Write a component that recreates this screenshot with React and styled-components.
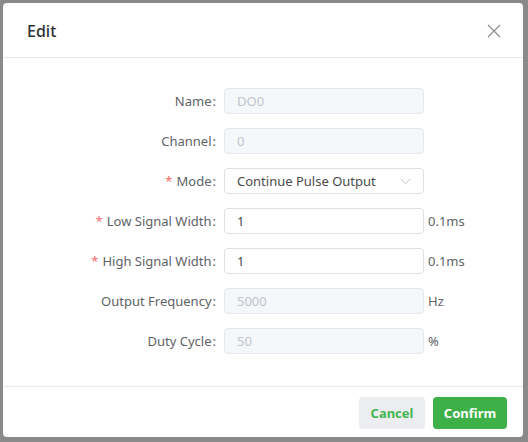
import React from "react";
import styled, { createGlobalStyle } from "styled-components";

const Global = createGlobalStyle`
  html, body { margin: 0; padding: 0; }
  body {
    background: #8a8a8a;
    width: 528px;
    height: 442px;
    overflow: hidden;
    font-family: "Noto Sans", "Open Sans", Arial, sans-serif;
  }
`;

const Overlay = styled.div`
  width: 528px;
  height: 442px;
  padding: 3px 5px 5px 3px;
  box-sizing: border-box;
`;

const Dialog = styled.div`
  width: 520px;
  height: 434px;
  background: #fff;
  border-radius: 4px;
  display: flex;
  flex-direction: column;
  box-sizing: border-box;
`;

const Header = styled.div`
  height: 55px;
  flex: none;
  box-sizing: border-box;
  padding: 0 22px 0 24px;
  display: flex;
  align-items: center;
  justify-content: space-between;
  border-bottom: 1px solid #e8e8e8;
`;

const Title = styled.div`
  font-size: 16px;
  font-weight: 500;
  color: #303133;
  margin-top: 1px;
`;

const CloseBtn = styled.button`
  border: 0;
  background: none;
  padding: 0;
  width: 14px;
  height: 14px;
  display: flex;
  cursor: pointer;
  margin-top: 2px;
`;

const Body = styled.div`
  flex: 1;
  padding-top: 30px;
  display: flex;
  flex-direction: column;
  gap: 14px;
`;

const Row = styled.div`
  display: flex;
  align-items: center;
  height: 26px;
`;

const Label = styled.label`
  width: 213px;
  margin-right: 8px;
  text-align: right;
  font-size: 13px;
  color: #606266;
  white-space: nowrap;
`;

const Star = styled.span`
  color: #f56c6c;
  margin-right: 4px;
`;

const Colon = styled.span`
  margin-left: 1px;
`;

const Input = styled.input`
  width: 200px;
  height: 26px;
  box-sizing: border-box;
  border: 1px solid ${(p) => (p.disabled ? "#e4e7ed" : "#dcdfe6")};
  background: ${(p) => (p.disabled ? "#f5f7fa" : "#fff")};
  color: ${(p) => (p.disabled ? "#c0c4cc" : "#4a4a4a")};
  border-radius: 4px;
  padding: 0 12px;
  font-family: inherit;
  font-size: 13px;
  outline: none;
`;

const SelectBox = styled.div`
  width: 200px;
  height: 26px;
  box-sizing: border-box;
  border: 1px solid #dcdfe6;
  border-radius: 4px;
  padding: 0 12px;
  display: flex;
  align-items: center;
  justify-content: space-between;
  font-size: 13px;
  color: #4a4a4a;
`;

const Unit = styled.span`
  margin-left: 4px;
  font-size: 13px;
  color: #606266;
`;

const Footer = styled.div`
  flex: none;
  border-top: 1px solid #e8e8e8;
  padding: 10px 16px 8px;
  display: flex;
  justify-content: flex-end;
  gap: 8px;
`;

const Button = styled.button`
  height: 32px;
  width: ${(p) => p.w}px;
  border: 0;
  border-radius: 4px;
  font-family: inherit;
  font-size: 13px;
  font-weight: 700;
  cursor: pointer;
  background: ${(p) => (p.primary ? "#3db148" : "#ebedf0")};
  color: ${(p) => (p.primary ? "#fff" : "#45b550")};
`;

const Chevron = () => (
  <svg width="11" height="7" viewBox="0 0 11 7" fill="none">
    <polyline points="0.5,0.8 5.5,5.8 10.5,0.8" stroke="#c0c4cc" strokeWidth="1" />
  </svg>
);

const Field = ({ label, required, children, unit }) => (
  <Row>
    <Label>
      {required && <Star>*</Star>}
      {label}
      <Colon>:</Colon>
    </Label>
    {children}
    {unit && <Unit>{unit}</Unit>}
  </Row>
);

export default function App() {
  return (
    <>
      <Global />
      <Overlay>
        <Dialog>
          <Header>
            <Title>Edit</Title>
            <CloseBtn aria-label="close">
              <svg width="14" height="14" viewBox="0 0 14 14">
                <path d="M1 1 L13 13 M13 1 L1 13" stroke="#8c8c8c" strokeWidth="1.2" />
              </svg>
            </CloseBtn>
          </Header>
          <Body>
            <Field label="Name">
              <Input disabled value="DO0" readOnly />
            </Field>
            <Field label="Channel">
              <Input disabled value="0" readOnly />
            </Field>
            <Field label="Mode" required>
              <SelectBox>
                <span>Continue Pulse Output</span>
                <Chevron />
              </SelectBox>
            </Field>
            <Field label="Low Signal Width" required unit="0.1ms">
              <Input value="1" readOnly />
            </Field>
            <Field label="High Signal Width" required unit="0.1ms">
              <Input value="1" readOnly />
            </Field>
            <Field label="Output Frequency" unit="Hz">
              <Input disabled value="5000" readOnly />
            </Field>
            <Field label="Duty Cycle" unit="%">
              <Input disabled value="50" readOnly />
            </Field>
          </Body>
          <Footer>
            <Button w={66}>Cancel</Button>
            <Button w={74} primary>Confirm</Button>
          </Footer>
        </Dialog>
      </Overlay>
    </>
  );
}
